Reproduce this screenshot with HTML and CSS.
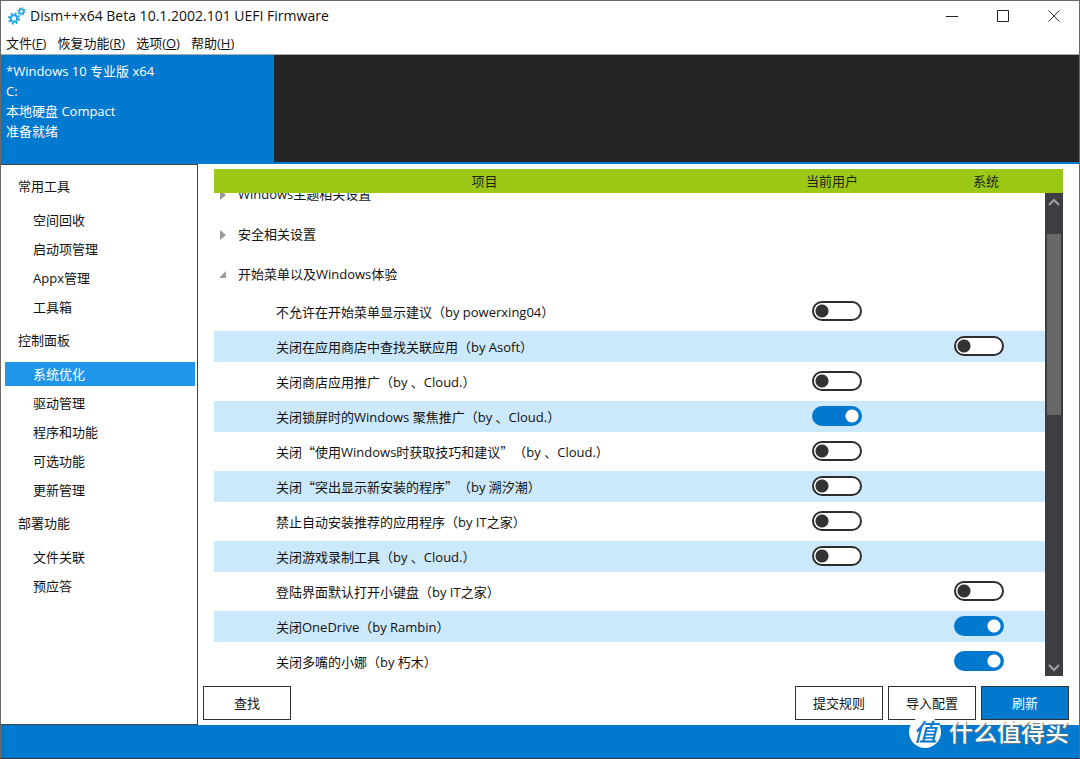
FILE: index.html
```html
<!DOCTYPE html>
<html lang="zh-CN">
<head>
<meta charset="utf-8">
<title>Dism++x64 Beta 10.1.2002.101 UEFI Firmware</title>
<link rel="stylesheet" href="styles.css">
</head>
<body>
<div class="window">
  <header class="titlebar">
    <svg class="logo" width="18" height="18" viewBox="0 0 18 18" fill="none" stroke="#1aa3e6">
      <circle cx="6" cy="11.5" r="3.3" stroke-width="2"/>
      <circle cx="6" cy="11.5" r="5" stroke-width="2" stroke-dasharray="1.96 1.96"/>
      <circle cx="13.5" cy="4.5" r="2.2" stroke-width="1.5"/>
      <circle cx="13.5" cy="4.5" r="3.5" stroke-width="1.5" stroke-dasharray="1.37 1.37"/>
    </svg>
    <h1 class="title">Dism++x64 Beta 10.1.2002.101 UEFI Firmware</h1>
    <div class="caption">
      <button class="caption-button" aria-label="最小化"><svg width="12" height="12" viewBox="0 0 12 12"><path d="M0 6.5H12" stroke="#222" fill="none"/></svg></button>
      <button class="caption-button" aria-label="最大化"><svg width="12" height="12" viewBox="0 0 12 12"><path d="M.5 .5H11.5V11.5H.5Z" stroke="#222" fill="none"/></svg></button>
      <button class="caption-button" aria-label="关闭"><svg width="12" height="12" viewBox="0 0 12 12"><path d="M.5 .5L11.5 11.5M11.5 .5L.5 11.5" stroke="#333" fill="none"/></svg></button>
    </div>
  </header>
  <nav class="menubar">
    <button class="menu">文件(<u>F</u>)</button>
    <button class="menu">恢复功能(<u>R</u>)</button>
    <button class="menu">选项(<u>O</u>)</button>
    <button class="menu">帮助(<u>H</u>)</button>
  </nav>
  <section class="systems">
    <button class="system">*Windows 10 专业版 x64<br>C:<br>本地硬盘 Compact<br>准备就绪</button>
  </section>
  <div class="content">
    <nav class="sidebar">
      <h2 class="group">常用工具</h2>
      <button class="item">空间回收</button>
      <button class="item">启动项管理</button>
      <button class="item">Appx管理</button>
      <button class="item">工具箱</button>
      <h2 class="group">控制面板</h2>
      <button class="item selected">系统优化</button>
      <button class="item">驱动管理</button>
      <button class="item">程序和功能</button>
      <button class="item">可选功能</button>
      <button class="item">更新管理</button>
      <h2 class="group">部署功能</h2>
      <button class="item">文件关联</button>
      <button class="item">预应答</button>
    </nav>
    <main class="main">
      <div class="panel">
        <div class="columns"><span>项目</span><span>当前用户</span><span>系统</span></div>
        <div class="viewport">
          <div class="list">
            <table class="rules">
              <colgroup><col><col class="col-user"><col class="col-system"></colgroup>
              <tbody>
                <tr class="category"><th colspan="3"><svg class="arrow" width="8" height="10" viewBox="0 0 8 10"><path d="M0 0L6 5L0 10Z" fill="#999"/></svg>Windows主题相关设置</th></tr>
                <tr class="category"><th colspan="3"><svg class="arrow" width="8" height="10" viewBox="0 0 8 10"><path d="M0 0L6 5L0 10Z" fill="#999"/></svg>安全相关设置</th></tr>
                <tr class="category"><th colspan="3"><svg class="arrow" width="8" height="10" viewBox="0 0 8 10"><path d="M6 1V8H-1Z" fill="#999"/></svg>开始菜单以及Windows体验</th></tr>
                <tr class="rule"><td><label for="r1">不允许在开始菜单显示建议（by powerxing04）</label></td><td><input class="switch" type="checkbox" id="r1"></td><td></td></tr>
                <tr class="rule"><td><label for="r2">关闭在应用商店中查找关联应用（by Asoft）</label></td><td></td><td><input class="switch" type="checkbox" id="r2"></td></tr>
                <tr class="rule"><td><label for="r3">关闭商店应用推广（by 、Cloud.）</label></td><td><input class="switch" type="checkbox" id="r3"></td><td></td></tr>
                <tr class="rule"><td><label for="r4">关闭锁屏时的Windows 聚焦推广（by 、Cloud.）</label></td><td><input class="switch" type="checkbox" id="r4" checked></td><td></td></tr>
                <tr class="rule"><td><label for="r5">关闭<span class="quoted">“使用</span>Windows<span class="quoted">时获取技巧和建议”</span>（by 、Cloud.）</label></td><td><input class="switch" type="checkbox" id="r5"></td><td></td></tr>
                <tr class="rule"><td><label for="r6">关闭<span class="quoted">“突出显示新安装的程序”</span>（by 溯汐潮）</label></td><td><input class="switch" type="checkbox" id="r6"></td><td></td></tr>
                <tr class="rule"><td><label for="r7">禁止自动安装推荐的应用程序（by IT之家）</label></td><td><input class="switch" type="checkbox" id="r7"></td><td></td></tr>
                <tr class="rule"><td><label for="r8">关闭游戏录制工具（by 、Cloud.）</label></td><td><input class="switch" type="checkbox" id="r8"></td><td></td></tr>
                <tr class="rule"><td><label for="r9">登陆界面默认打开小键盘（by IT之家）</label></td><td></td><td><input class="switch" type="checkbox" id="r9"></td></tr>
                <tr class="rule"><td><label for="r10">关闭OneDrive（by Rambin）</label></td><td></td><td><input class="switch" type="checkbox" id="r10" checked></td></tr>
                <tr class="rule"><td><label for="r11">关闭多嘴的小娜（by 朽木）</label></td><td></td><td><input class="switch" type="checkbox" id="r11" checked></td></tr>
              </tbody>
            </table>
          </div>
          <div class="scrollbar">
            <svg width="12" height="8" viewBox="0 0 12 8"><path d="M1 7L6 2L11 7" stroke="#a0a0a4" stroke-width="2" fill="none"/></svg>
            <div class="track"><div class="thumb"></div></div>
            <svg width="12" height="8" viewBox="0 0 12 8"><path d="M1 1L6 6L11 1" stroke="#a0a0a4" stroke-width="2" fill="none"/></svg>
          </div>
        </div>
      </div>
      <div class="actions">
        <button class="action find">查找</button>
        <button class="action">提交规则</button>
        <button class="action">导入配置</button>
        <button class="action primary">刷新</button>
      </div>
    </main>
  </div>
  <footer class="statusbar"></footer>
  <div class="watermark"><span class="badge">值</span><span>什么值得买</span></div>
</div>
</body>
</html>
```
FILE: styles.css
```css
* { box-sizing: border-box; }
body {
  margin: 0;
  font-family: "Open Sans", "Noto Sans CJK SC", sans-serif;
  font-size: 13px;
  line-height: 20px;
  text-spacing-trim: space-all;
  color: #111;
}
button {
  border: 0;
  padding: 0;
  background: none;
  font: inherit;
  color: inherit;
}
h1, h2 { margin: 0; font: inherit; }

.window {
  position: relative;
  display: flex;
  flex-direction: column;
  height: 100vh;
  border: 1px solid #6b686b;
  border-bottom-color: #333;
  background: #fff;
  overflow: hidden;
}

.titlebar { display: flex; align-items: center; height: 30px; padding-left: 7px; }
.title { flex: 1; padding-left: 4px; font-size: 14px; }
.caption { display: flex; }
.caption-button { display: flex; align-items: center; justify-content: center; width: 51px; height: 30px; }

.menubar {
  display: flex;
  gap: 11px;
  height: 24px;
  padding-left: 5px;
  border-bottom: 1px solid #aaa;
}

.systems { display: flex; height: 109px; background: #252525; border-bottom: 2px solid #0079cf; }
.system {
  display: flow-root;
  width: 273px;
  height: 109px;
  padding: 6px 5px 23px;
  background: #0079cf;
  color: #fff;
  text-align: left;
}

.content { display: flex; flex: 1; min-height: 0; }
.sidebar {
  display: flex;
  flex-direction: column;
  gap: 5px;
  width: 197px;
  padding: 9px 2px 0 4px;
  border: 1px solid #444;
  border-left: 0;
}
.group { padding-left: 13px; line-height: 24px; }
.group + .item { margin-top: 5px; }
.item + .group { margin-top: 4px; }
.item { height: 24px; padding-left: 28px; text-align: left; }
.item.selected { background: #1e96ea; color: #fff; }

.main { display: flex; flex-direction: column; flex: 1; min-width: 0; padding: 5px 10px 5px 5px; }
.panel { display: flex; flex-direction: column; flex: 1; min-height: 0; margin: 0 6px 10px 11px; }
.columns {
  display: grid;
  grid-template-columns: 1fr 154px 154px;
  background: #9bc916;
  color: #222;
  line-height: 24px;
  text-align: center;
}
.viewport { display: flex; flex: 1; min-height: 0; }
.list { flex: 1; overflow: hidden; }
.rules {
  width: 100%;
  margin-top: -21px;
  table-layout: fixed;
  border-collapse: separate;
  border-spacing: 0 4px;
}
.col-user { width: 142px; }
.col-system { width: 137px; }
.rules th, .rules td { padding: 0; text-align: center; font-weight: normal; }
.rules th { height: 36px; padding-left: 6px; text-align: left; }
.arrow { margin-right: 10px; vertical-align: -1px; }
.rules td { height: 31px; padding-bottom: 2px; }
.rules td:first-child { padding: 0 0 0 62px; text-align: left; }
.rules td:last-child { padding-left: 5px; }
.rule:nth-child(odd) { background: #cce8fb; }
.quoted { font-family: "Noto Sans CJK SC", sans-serif; }

.switch {
  appearance: none;
  display: block;
  width: 50px;
  height: 20px;
  margin: 0 auto;
  border: 2px solid #2d2d2d;
  border-radius: 10px;
  background: radial-gradient(circle at 8px 8px, #333 6px, transparent 7px) #fff;
}
.switch:checked {
  border-color: #0079cf;
  background: radial-gradient(circle at 38px 8px, #fff 6px, #0079cf 7px) #0079cf;
}

.scrollbar {
  display: flex;
  flex-direction: column;
  align-items: center;
  width: 18px;
  padding: 5px 0 4px;
  background: #3e3e42;
}
.track { flex: 1; width: 14px; padding: 28px 0; }
.thumb { height: 45%; background: #686868; }

.actions { display: flex; gap: 5px; }
.action { width: 88px; height: 34px; border: 1px solid #333; background: #fff; }
.find { margin-right: auto; }
.primary { background: #0079cf; color: #fff; }

.statusbar { height: 33px; background: #0079cf; }

.watermark {
  position: absolute;
  right: 10px;
  bottom: 9px;
  display: flex;
  align-items: center;
  gap: 8px;
  color: #fff;
  font-size: 24px;
  font-weight: 500;
  line-height: 34px;
  text-shadow: 1px 1px 1px #777;
}
.badge {
  width: 32px;
  height: 32px;
  border-radius: 50%;
  background: #fff;
  color: #0079cf;
  font-style: italic;
  line-height: 32px;
  text-align: center;
  text-shadow: none;
}
```
